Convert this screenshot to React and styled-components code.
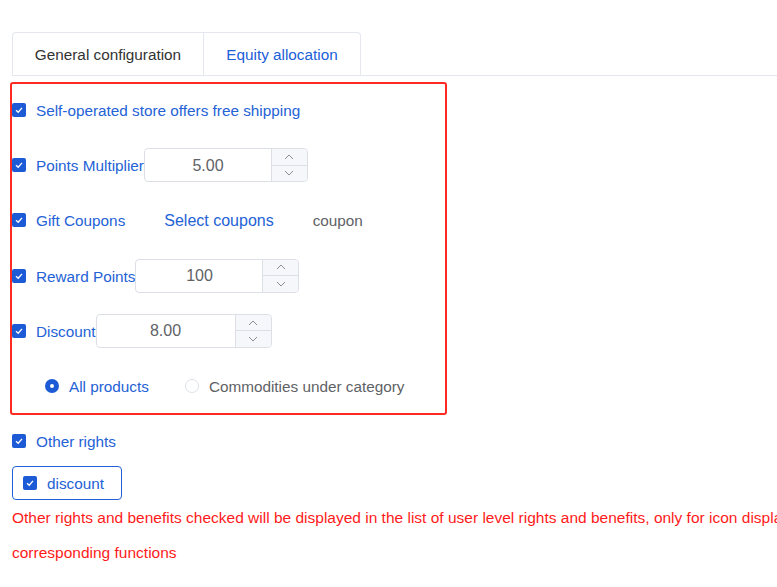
import React, { useState } from "react";
import styled, { createGlobalStyle } from "styled-components";

const GlobalStyle = createGlobalStyle`
  body {
    margin: 0;
    background: #fff;
    font-family: "Liberation Sans", Arial, sans-serif;
    overflow: hidden;
  }
`;

const Page = styled.div`
  width: 900px;
  padding: 32px 0 0 12px;
`;

const TabBar = styled.div`
  display: flex;
  border-bottom: 1px solid #e4e7ed;
  margin-right: -200px;
`;

const Tab = styled.div`
  height: 43px;
  width: ${(p) => p.width}px;
  display: flex;
  align-items: center;
  justify-content: center;
  box-sizing: border-box;
  padding-top: 2px;
  border: 1px solid #e4e7ed;
  border-bottom: none;
  border-left: ${(p) => (p.first ? "1px solid #e4e7ed" : "none")};
  border-radius: ${(p) => (p.first ? "4px 0 0 0" : "0 4px 0 0")};
  font-size: 15.3px;
  color: ${(p) => (p.active ? "#2160d8" : "#333")};
`;

const RedBox = styled.div`
  margin: 6px 0 0 -2px;
  width: 437px;
  box-sizing: border-box;
  border: 2px solid #ff2a22;
  border-radius: 3px;
  padding: 9px 0 10px 0;
  display: flex;
  flex-direction: column;
  gap: 21.2px;
`;

const Row = styled.div`
  height: 34px;
  display: flex;
  align-items: center;
  padding-left: ${(p) => p.indent || 0}px;
`;

const Check = styled.span`
  width: 14px;
  height: 14px;
  border-radius: 2px;
  background: #1d5bd6;
  display: inline-flex;
  align-items: center;
  justify-content: center;
  flex-shrink: 0;
  margin-right: 10px;
`;

const Label = styled.span`
  font-size: 15.3px;
  padding-top: 2px;
  color: ${(p) => (p.muted ? "#606266" : "#2462d6")};
  white-space: nowrap;
`;

const LinkButton = styled.span`
  font-size: 16px;
  padding-top: 2px;
  color: #2462d6;
  margin: 0 39px 0 39px;
`;

const Stepper = styled.div`
  display: flex;
  height: 34px;
  width: ${(p) => p.width}px;
  box-sizing: border-box;
  border: 1px solid #dcdfe6;
  border-radius: 4px;
  overflow: hidden;
  flex-shrink: 0;
`;

const StepValue = styled.div`
  flex: 1;
  display: flex;
  align-items: center;
  justify-content: center;
  padding-top: 1px;
  font-size: 16px;
  color: #606266;
`;

const StepControls = styled.div`
  width: 35px;
  border-left: 1px solid #dcdfe6;
  background: #f5f7fa;
  display: flex;
  flex-direction: column;
`;

const StepHalf = styled.div`
  flex: 1;
  display: flex;
  align-items: center;
  justify-content: center;
  & + & {
    border-top: 1px solid #dcdfe6;
  }
`;

const Radio = styled.span`
  width: 14px;
  height: 14px;
  box-sizing: border-box;
  border-radius: 50%;
  margin-right: 10px;
  flex-shrink: 0;
  border: ${(p) => (p.on ? "5px solid #1d5bd6" : "1px solid #dcdfe6")};
  background: #fff;
`;

const RadioItem = styled.label`
  display: flex;
  align-items: center;
  margin-right: 36px;
`;

const Below = styled.div`
  margin-top: 9px;
`;

const CheckButton = styled.div`
  margin-top: 8px;
  height: 34px;
  width: 110px;
  box-sizing: border-box;
  border: 1px solid #2160d8;
  border-radius: 4px;
  display: flex;
  align-items: center;
  padding-left: 10px;
`;

const Notice = styled.p`
  margin: 0;
  font-size: 15.5px;
  line-height: 35px;
  color: #ff1a1a;
  width: 900px;
`;

const Tick = () => (
  <svg width="10" height="10" viewBox="0 0 10 10">
    <path d="M2 5.2 L4.2 7.2 L8 2.8" fill="none" stroke="#fff" strokeWidth="1.3" />
  </svg>
);

const Chevron = ({ down }) => (
  <svg width="10" height="6" viewBox="0 0 10 6">
    <path
      d={down ? "M1 1 L5 5 L9 1" : "M1 5 L5 1 L9 5"}
      fill="none"
      stroke="#8a8d93"
      strokeWidth="1"
    />
  </svg>
);

function NumberBox({ value, width }) {
  return (
    <Stepper width={width}>
      <StepValue>{value}</StepValue>
      <StepControls>
        <StepHalf>
          <Chevron />
        </StepHalf>
        <StepHalf>
          <Chevron down />
        </StepHalf>
      </StepControls>
    </Stepper>
  );
}

export default function App() {
  const [scope, setScope] = useState("all");

  return (
    <>
      <GlobalStyle />
      <Page>
        <TabBar>
          <Tab first width={192}>General configuration</Tab>
          <Tab active width={157}>Equity allocation</Tab>
        </TabBar>

        <RedBox>
          <Row>
            <Check><Tick /></Check>
            <Label>Self-operated store offers free shipping</Label>
          </Row>
          <Row>
            <Check><Tick /></Check>
            <Label>Points Multiplier</Label>
            <NumberBox value="5.00" width={164} />
          </Row>
          <Row>
            <Check><Tick /></Check>
            <Label>Gift Coupons</Label>
            <LinkButton>Select coupons</LinkButton>
            <Label muted>coupon</Label>
          </Row>
          <Row>
            <Check><Tick /></Check>
            <Label>Reward Points</Label>
            <NumberBox value="100" width={164} />
          </Row>
          <Row>
            <Check><Tick /></Check>
            <Label>Discount</Label>
            <NumberBox value="8.00" width={176} />
          </Row>
          <Row indent={33}>
            <RadioItem onClick={() => setScope("all")}>
              <Radio on={scope === "all"} />
              <Label muted={scope !== "all"}>All products</Label>
            </RadioItem>
            <RadioItem onClick={() => setScope("category")}>
              <Radio on={scope === "category"} />
              <Label muted={scope !== "category"}>Commodities under category</Label>
            </RadioItem>
          </Row>
        </RedBox>

        <Below>
          <Row>
            <Check><Tick /></Check>
            <Label>Other rights</Label>
          </Row>
          <CheckButton>
            <Check><Tick /></Check>
            <Label>discount</Label>
          </CheckButton>
          <Notice>
            Other rights and benefits checked will be displayed in the list of user level rights and
            benefits, only for icon display, without corresponding functions
          </Notice>
        </Below>
      </Page>
    </>
  );
}
